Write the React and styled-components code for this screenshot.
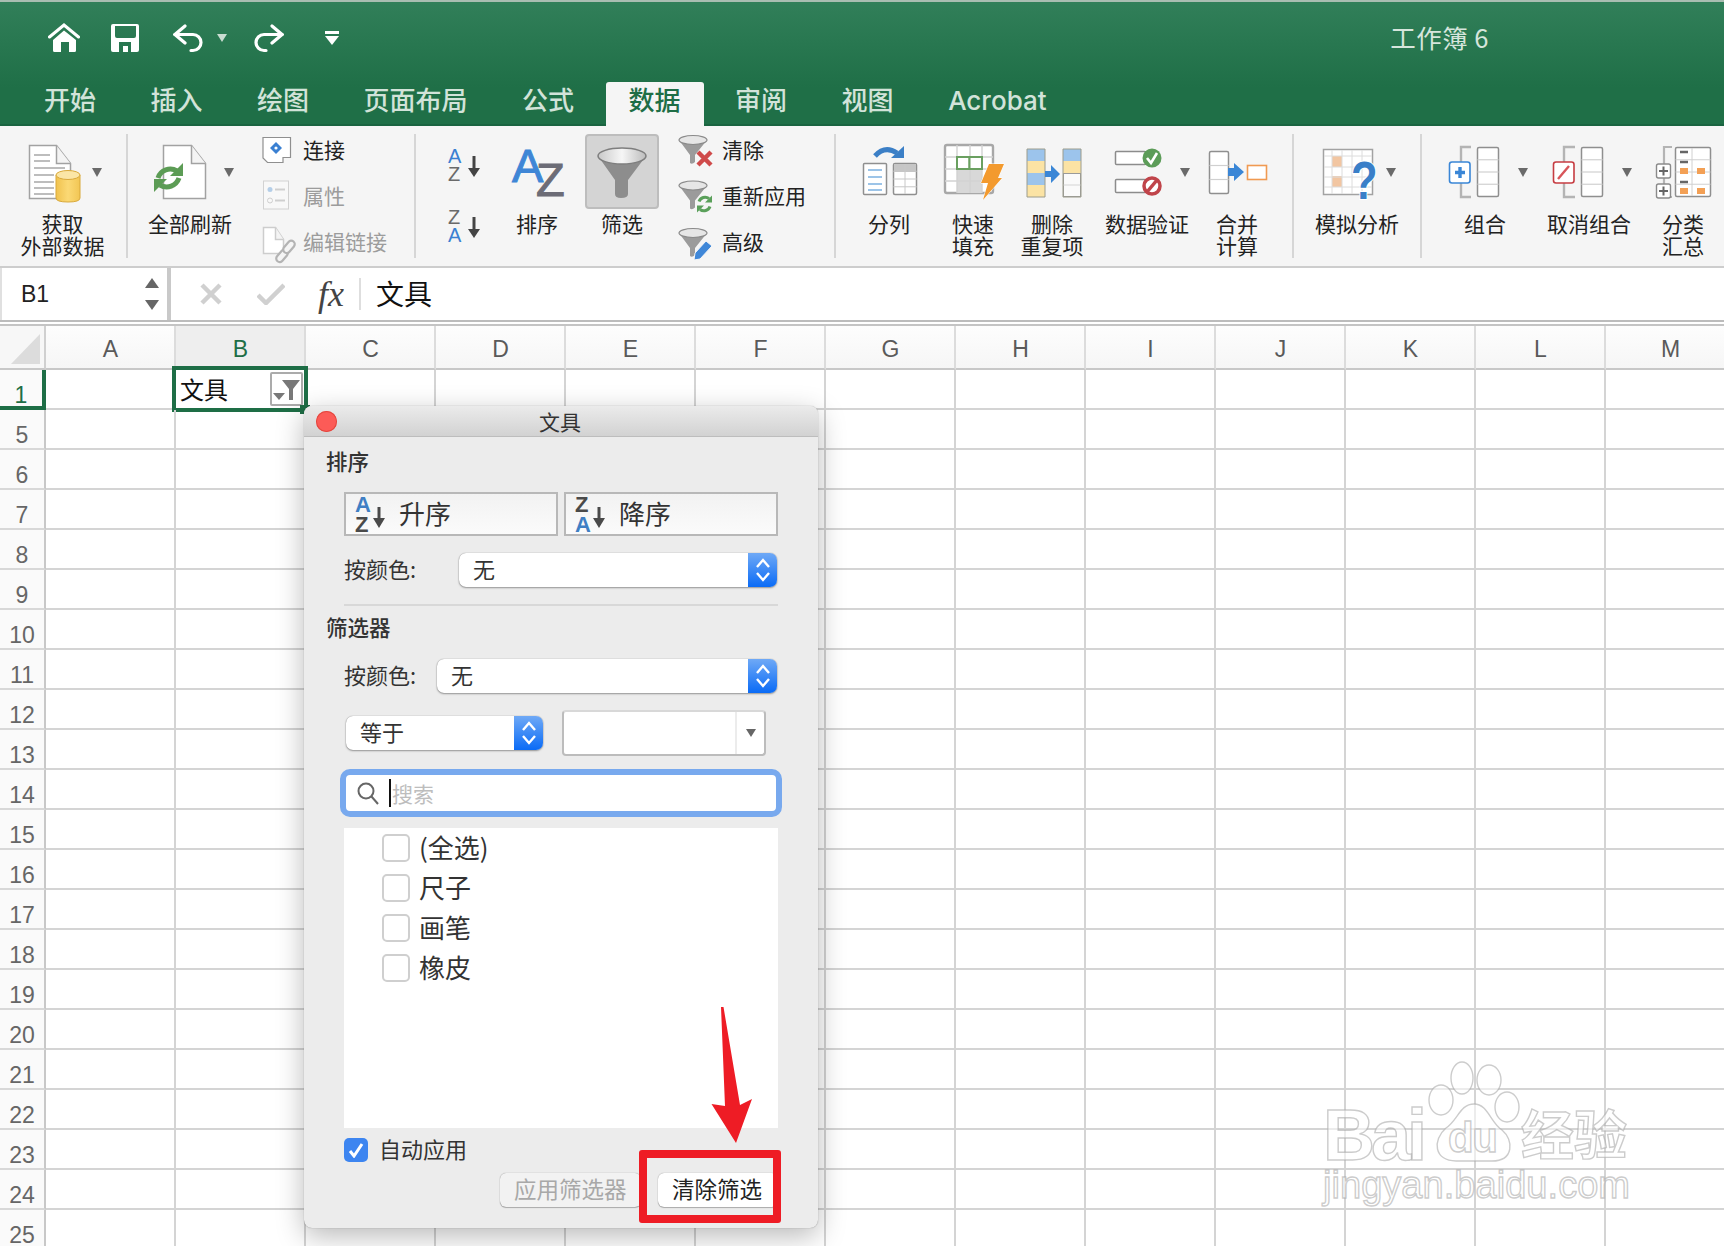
import React from "react";
import styled, { createGlobalStyle } from "styled-components";

// ============ CSS ============== //
const Global = createGlobalStyle`
  html, body { margin: 0; padding: 0; background: #fff; }
  body { font-family: "Noto Sans CJK SC", "Liberation Sans", sans-serif; }
`;

const Page = styled.div`
  position: relative;
  width: 1724px;
  height: 1246px;
  overflow: hidden;
  background: #fff;
`;

const TitleBar = styled.div`
  height: 126px;
  box-sizing: border-box;
  border-top: 2px solid #a9bdb1;
  border-bottom: 2px solid #1a6440;
  background: linear-gradient(#317f59, #1f6f47 70%);
`;
const QuickBar = styled.div`
  height: 80px;
  display: flex;
  align-items: center;
  padding: 0 235px 8px 48px;
  box-sizing: border-box;
`;
const QuickIcon = styled.svg`
  display: block;
  flex: none;
  margin-left: ${(p) => p.$ml || 0}px;
`;
const DocTitle = styled.div`
  margin: -3px 0 0 auto;
  font-size: 25.5px;
  letter-spacing: 0.5px;
  color: #d6e5dc;
`;
const Tabs = styled.div`
  display: flex;
  gap: 8.5px;
  padding-left: 21px;
  height: 42px;
`;
const Tab = styled.div`
  height: 44px;
  box-sizing: border-box;
  padding: 0 23px 6px;
  display: flex;
  align-items: center;
  font-size: 26px;
  line-height: 1;
  border-radius: 3px 3px 0 0;
  color: ${(p) => (p.$active ? "#1e6e46" : "#d2e3d9")};
  background: ${(p) => (p.$active ? "#f5f5f5" : "transparent")};
  font-weight: 500;
  font-family: "Inter", "Noto Sans CJK SC", sans-serif;
`;

const Ribbon = styled.div`
  height: 142px;
  box-sizing: border-box;
  display: flex;
  background: #f5f5f5;
  border-bottom: 2px solid #cdcdcd;
`;
const Divider = styled.div`
  flex: none;
  width: 2px;
  height: 124px;
  margin: 8px 0 0 ${(p) => p.$ml || 0}px;
  background: #d6d6d6;
`;
const Item = styled.div`
  flex: none;
  width: ${(p) => p.$w}px;
  margin-left: ${(p) => p.$ml || 0}px;
  padding-top: 8px;
  box-sizing: border-box;
`;
const IconSvg = styled.svg`
  display: block;
  overflow: visible;
`;
const Label = styled.div`
  margin: -1px -10px 0;
  font-size: 21px;
  line-height: 22px;
  color: #222;
  text-align: center;
  white-space: pre-line;
`;
const SmallCol = styled.div`
  flex: none;
  width: ${(p) => p.$w}px;
  padding-left: ${(p) => p.$pl}px;
  box-sizing: border-box;
`;
const SmallRow = styled.div`
  height: 46px;
  display: flex;
  align-items: center;
  gap: 9px;
  font-size: 21px;
  color: ${(p) => (p.$off ? "#9c9c9c" : "#222")};
`;
const RowIconWrap = styled.span`
  display: block;
  margin-top: 2px;
`;
const FilterButton = styled.div`
  position: absolute;
  left: 0;
  right: 0;
  top: 8px;
  height: 75px;
  box-sizing: border-box;
  background: #d4d4d4;
  border: 2px solid #bdbdbd;
  border-radius: 4px;
`;
const FilterItem = styled(Item)`
  position: relative;
  & > svg { position: relative; }
  & > ${Label} { position: relative; }
`;

const FormulaBar = styled.div`
  height: 52px;
  display: flex;
  align-items: center;
  background: #fff;
`;
const NameBox = styled.div`
  width: 171px;
  height: 52px;
  box-sizing: border-box;
  border-right: 4px solid #c9c9c9;
  border-left: 2px solid #e0e0e0;
  display: flex;
  align-items: center;
  justify-content: space-between;
  padding: 0 8px 0 19px;
  font-size: 23px;
  font-family: "Liberation Sans", sans-serif;
  color: #222;
`;
const FormulaTools = styled.div`
  display: flex;
  align-items: center;
  width: 190px;
  height: 32px;
  margin-right: 15px;
  border-right: 2px solid #dedede;
  padding-left: 29px;
  box-sizing: border-box;
`;
const CheckIcon = styled.svg`
  margin-left: 35px;
`;
const Fx = styled.span`
  font-family: "Liberation Serif", serif;
  font-style: italic;
  font-size: 36px;
  line-height: 32px;
  color: #444;
  margin-left: 33px;
`;
const FormulaText = styled.div`
  font-size: 28px;
  margin-top: -2px;
  color: #111;
`;
const Rule = styled.div`
  height: 2px;
  border-top: 2px solid #bcbcbc;
  border-bottom: 2px solid #c4c4c4;
`;

const Sheet = styled.div`
  display: grid;
  grid-template-columns: 46px repeat(13, 130px);
  grid-template-rows: 44px;
  grid-auto-rows: 40px;
  width: 1736px;
`;
const Corner = styled.div`
  box-sizing: border-box;
  background: #f7f7f7;
  border-right: 2px solid #d0d0d0;
  border-bottom: 2px solid #c8c8c8;
  display: flex;
  align-items: flex-end;
  padding: 0 0 4px 11px;
`;
const ColHead = styled.div`
  box-sizing: border-box;
  background: ${(p) => (p.$on ? "#eeeeee" : "linear-gradient(#fdfdfd, #f6f6f6)")};
  border-right: 2px solid #dcdcdc;
  border-bottom: 2px solid #c8c8c8;
  display: flex;
  align-items: center;
  justify-content: center;
  padding: 5px 0 0 1px;
  font-family: "Liberation Sans", sans-serif;
  font-size: 23px;
  color: ${(p) => (p.$on ? "#1e6e46" : "#5a5a5a")};
`;
const RowHead = styled.div`
  box-sizing: border-box;
  background: #fafafa;
  border-right: ${(p) => (p.$on ? "4px solid #1e6e46" : "2px solid #c8c8c8")};
  border-bottom: ${(p) => (p.$on ? "4px solid #1e6e46" : "2px solid #d8d8d8")};
  display: flex;
  justify-content: center;
  padding-top: 14px;
  font-family: "Liberation Sans", sans-serif;
  font-size: 23px;
  line-height: 22px;
  color: ${(p) => (p.$on ? "#1e6e46" : "#666")};
`;
const Cell = styled.div`
  position: relative;
  box-sizing: border-box;
  border-right: 2px solid #d4d4d4;
  border-bottom: 2px solid #d4d4d4;
`;
const ActiveCell = styled(Cell)`
  border: none;
  display: flex;
  align-items: center;
  padding: 0 0 4px 4px;
  font-size: 24px;
  color: #111;
  &::after {
    content: "";
    position: absolute;
    inset: -4px -2px -2px -4px;
    border: 4px solid #1e6e46;
  }
`;
const FilterChip = styled.div`
  position: absolute;
  right: 3px;
  top: 2px;
  width: 33px;
  height: 34px;
  box-sizing: border-box;
  border: 2px solid #ababab;
  border-radius: 2px;
  background: #fff;
`;
const Handle = styled.div`
  position: absolute;
  right: -4px;
  bottom: -4px;
  width: 10px;
  height: 9px;
  background: #1e6e46;
  z-index: 1;
`;

const Dialog = styled.div`
  position: absolute;
  left: 304px;
  top: 406px;
  width: 514px;
  height: 822px;
  box-sizing: border-box;
  background: #ececec;
  border-radius: 8px;
  box-shadow: 0 0 1px rgba(0, 0, 0, 0.45), 0 8px 28px rgba(0, 0, 0, 0.28);
  z-index: 2;
`;
const DialogTitle = styled.div`
  position: relative;
  height: 31px;
  box-sizing: border-box;
  padding-right: 2px;
  border-radius: 8px 8px 0 0;
  border-bottom: 1px solid #bdbdbd;
  background: linear-gradient(#ebebeb, #d2d2d2);
  text-align: center;
  font-size: 21px;
  line-height: 30px;
  color: #333;
`;
const CloseDot = styled.span`
  position: absolute;
  left: 12px;
  top: 5px;
  width: 21px;
  height: 21px;
  border-radius: 50%;
  background: #fc5b57;
  box-shadow: inset 0 0 0 1px #e2473f;
`;
const DialogBody = styled.div`
  padding: 0 40px;
`;
const Heading = styled.div`
  margin: ${(p) => p.$mt}px 0 0 -18px;
  height: 24px;
  line-height: 22px;
  font-size: 21.5px;
  font-weight: 500;
  color: #333;
`;
const SortRow = styled.div`
  display: flex;
  gap: 6px;
  margin-top: 18px;
`;
const SortButton = styled.div`
  width: 214px;
  height: 44px;
  box-sizing: border-box;
  border: 2px solid #b8b8b8;
  background: linear-gradient(#f2f2f2, #fbfbfb);
  display: flex;
  align-items: center;
  gap: 7px;
  padding-left: 8px;
  font-size: 26px;
  line-height: 36px;
  color: #333;
`;
const SortWord = styled.span`
  margin-top: -2px;
`;
const FieldRow = styled.div`
  display: flex;
  align-items: center;
  justify-content: space-between;
  margin-top: ${(p) => p.$mt}px;
  padding-right: 1px;
`;
const FieldLabel = styled.span`
  font-size: 22px;
  line-height: 30px;
  margin-top: -5px;
  color: #333;
`;
const Select = styled.div`
  width: ${(p) => p.$w}px;
  margin-left: ${(p) => p.$ml || 0}px;
  height: 34px;
  box-sizing: border-box;
  display: flex;
  justify-content: space-between;
  align-items: center;
  padding-left: 14px;
  background: #fff;
  border-radius: 7px;
  box-shadow: 0 0 1px rgba(0, 0, 0, 0.45), 0 1px 2px rgba(0, 0, 0, 0.35);
  overflow: hidden;
`;
const SelectText = styled.span`
  font-size: 22px;
  line-height: 30px;
  margin-top: -4px;
  color: #333;
`;
const Stepper = styled.div`
  flex: none;
  width: 29px;
  height: 34px;
  display: flex;
  align-items: center;
  justify-content: center;
  background: linear-gradient(#6fa9f6, #0a6bf6);
`;
const DialogRule = styled.div`
  height: 2px;
  margin-top: 17px;
  background: #d8d8d8;
`;
const Combo = styled.div`
  width: 204px;
  height: 46px;
  margin-right: 11px;
  box-sizing: border-box;
  display: flex;
  background: #fff;
  border: 2px solid #bcbcbc;
  border-top-color: #d8d8d8;
  border-radius: 4px;
`;
const ComboInput = styled.div`
  flex: 1;
  border-right: 2px solid #ececec;
`;
const ComboArrow = styled.div`
  flex: none;
  width: 27px;
  display: flex;
  justify-content: center;
  padding-top: 17px;
  box-sizing: border-box;
  &::after {
    content: "";
    width: 0;
    height: 0;
    border: 5px solid transparent;
    border-top: 8px solid #666;
  }
`;
const SearchRing = styled.div`
  width: 442px;
  height: 48px;
  margin: 13px 0 0 -4px;
  box-sizing: border-box;
  border: 6px solid #78a9ee;
  border-radius: 10px;
  background: #fff;
  display: flex;
  align-items: center;
  padding-left: 11px;
  font-size: 21px;
  color: #bdbdbd;
`;
const TextCaret = styled.span`
  width: 2px;
  height: 28px;
  margin: 0 1px 0 10px;
  background: #111;
`;
const List = styled.div`
  width: 434px;
  height: 300px;
  margin-top: 11px;
  box-sizing: border-box;
  background: #fff;
  padding: 6px 0 0 38px;
`;
const ListRow = styled.div`
  height: 40px;
  display: flex;
  align-items: flex-start;
  gap: 9px;
  font-size: 26px;
  line-height: 26px;
  color: #333;
`;
const Box = styled.span`
  width: 28px;
  height: 28px;
  box-sizing: border-box;
  border: 2px solid #cfcfcf;
  border-radius: 5px;
  background: #fff;
`;
const AutoRow = styled.div`
  display: flex;
  align-items: center;
  gap: 11px;
  margin-top: 10px;
  height: 24px;
  font-size: 22px;
  line-height: 22px;
  color: #333;
`;
const AutoText = styled.span`
  margin-top: -5px;
`;
const BlueBox = styled.span`
  width: 24px;
  height: 24px;
  border-radius: 5px;
  background: #3d85f0;
  display: flex;
  align-items: center;
  justify-content: center;
`;
const ButtonRow = styled.div`
  display: flex;
  justify-content: flex-end;
  gap: 17px;
  margin-top: 11px;
`;
const PushButton = styled.div`
  width: ${(p) => p.$w}px;
  height: 34px;
  box-sizing: border-box;
  padding-left: 14px;
  border-radius: 6px;
  font-size: 22.5px;
  line-height: 30px;
  white-space: nowrap;
  color: ${(p) => (p.$off ? "#a8a8a8" : "#222")};
  background: ${(p) => (p.$off ? "#f2f2f2" : "#fff")};
  box-shadow: 0 0 1px rgba(0, 0, 0, 0.45), 0 1px 1px rgba(0, 0, 0, 0.25);
`;

const RedBox = styled.div`
  position: absolute;
  left: 639px;
  top: 1150px;
  width: 142px;
  height: 73px;
  box-sizing: border-box;
  border: 8px solid #ee1c25;
  border-radius: 3px;
  z-index: 3;
`;
const Overlay = styled.svg`
  position: absolute;
  left: 0;
  top: 0;
  z-index: 3;
  pointer-events: none;
`;

// ============ Drawing helpers ============== //
const latin = "Liberation Sans, sans-serif";
const cjk = "Noto Sans CJK SC, sans-serif";

const Icon = ({ left, w, children }) => (
  <IconSvg width={w} height={79} viewBox={`${left} 134 ${w} 79`}>
    {children}
  </IconSvg>
);
const RowIcon = ({ left, top, children }) => (
  <RowIconWrap>
    <IconSvg width={34} height={34} viewBox={`${left} ${top} 34 34`}>
      {children}
    </IconSvg>
  </RowIconWrap>
);
const Caret = ({ x, y = 172 }) => (
  <polygon points={`${x - 5},${y - 4} ${x + 5},${y - 4} ${x},${y + 5}`} fill="#6a6a6a" />
);
const Doc = ({ x, y, w, h, fold = 14, stroke = "#a2a2a2" }) => (
  <g fill="none" stroke={stroke} strokeWidth="1.5">
    <path d={`M${x} ${y}H${x + w - fold}L${x + w} ${y + fold + 4}V${y + h}H${x}Z`} fill="#fff" />
    <path d={`M${x + w - fold} ${y}V${y + fold + 4}H${x + w}`} fill="#f4f4f4" />
  </g>
);
const Funnel = ({ x, y }) => (
  <g transform={`translate(${x} ${y})`}>
    <path d="M0 5L11 20V28Q13 30 16 27V20L28 5Z" fill="#9b9b9b" />
    <ellipse cx="14" cy="5" rx="14" ry="4.5" fill="#e6e6e6" stroke="#8a8a8a" strokeWidth="1.2" />
  </g>
);
const Column = ({ x, y, w, h, rows = 4 }) => (
  <g>
    <rect x={x} y={y} width={w} height={h} rx="1.5" fill="#fff" stroke="#8f8f8f" strokeWidth="1.5" />
    {Array.from({ length: rows - 1 }, (_, i) => (
      <line key={i} x1={x} x2={x + w} y1={y + ((i + 1) * h) / rows} y2={y + ((i + 1) * h) / rows} stroke="#d0d0d0" strokeWidth="1.2" />
    ))}
  </g>
);
const SmallSort = ({ top, bottom, y }) => (
  <g fontFamily={latin} fontSize="20">
    <text x="448" y={y + 15} fill={top === "A" ? "#3a80d2" : "#6a6a6a"}>{top}</text>
    <text x="448" y={y + 33} fill={bottom === "A" ? "#3a80d2" : "#6a6a6a"}>{bottom}</text>
    <path d={`M474 ${y + 8}V${y + 24}`} stroke="#444" strokeWidth="3" />
    <polygon points={`${468},${y + 20} ${480},${y + 20} ${474},${y + 29}`} fill="#444" />
  </g>
);
const SortGlyph = ({ top, bottom }) => (
  <IconSvg width="38" height="40" viewBox="0 0 38 40">
    <g fontFamily={latin} fontSize="22" fontWeight="700">
      <text x="1" y="18" fill={top === "A" ? "#3f7fc4" : "#4a4a4a"}>{top}</text>
      <text x="1" y="38" fill={bottom === "A" ? "#3f7fc4" : "#4a4a4a"}>{bottom}</text>
    </g>
    <path d="M25 13V28" stroke="#4a4a4a" strokeWidth="3" />
    <polygon points="19,24 31,24 25,34" fill="#4a4a4a" />
  </IconSvg>
);
const Chevrons = () => (
  <svg width="16" height="26" viewBox="0 0 16 26" fill="none" stroke="#fff" strokeWidth="2.4">
    <path d="M2 10L8 3L14 10" />
    <path d="M2 16L8 23L14 16" />
  </svg>
);

const rows = [1, ...Array.from({ length: 21 }, (_, i) => i + 5)];
const cols = "ABCDEFGHIJKLM".split("");
const tabs = ["开始", "插入", "绘图", "页面布局", "公式", "数据", "审阅", "视图", "Acrobat"];
const values = ["(全选)", "尺子", "画笔", "橡皮"];

// ============ Function ============== //
const App = () => {
  return (
    <Page>
      <Global />
      <TitleBar>
        <QuickBar>
          <QuickIcon width="32" height="30" viewBox="0 0 32 30" fill="#fff">
            <path d="M1.5 14L16 2L30.5 14" fill="none" stroke="#fff" strokeWidth="3" strokeLinecap="round" />
            <path fillRule="evenodd" d="M5 17L16 7.5L28 17V27.5Q28 29 26.5 29H21V19H13V29H6.5Q5 29 5 27.5Z" />
          </QuickIcon>
          <QuickIcon $ml={31} width="28" height="28" viewBox="0 0 28 28" fill="#fff">
            <path fillRule="evenodd" d="M2 0H26Q28 0 28 2V26Q28 28 26 28H2Q0 28 0 26V2Q0 0 2 0ZM4 2V12Q4 14 6 14H23Q25 14 25 12V2ZM8 18V28H20V18Z" />
            <rect x="12" y="22" width="5" height="6" />
          </QuickIcon>
          <QuickIcon $ml={34} width="30" height="29" viewBox="0 0 30 29" fill="none" stroke="#fff" strokeWidth="3.2" strokeLinecap="round">
            <path d="M12 2L2 10.5L12 19" />
            <path d="M2 10.5H20A8 8 0 0 1 20 26.5H18" />
          </QuickIcon>
          <QuickIcon $ml={14} width="10" height="8" viewBox="0 0 10 8" fill="#c9ddd1">
            <polygon points="0,0 10,0 5,8" />
          </QuickIcon>
          <QuickIcon $ml={27} width="30" height="29" viewBox="0 0 30 29" fill="none" stroke="#fff" strokeWidth="3.2" strokeLinecap="round">
            <path d="M18 2L28 10.5L18 19" />
            <path d="M28 10.5H10A8 8 0 0 0 10 26.5H12" />
          </QuickIcon>
          <QuickIcon $ml={41} width="14" height="14" viewBox="0 0 14 14" fill="#fff">
            <rect x="0" y="0" width="14" height="3" />
            <polygon points="0,5 14,5 7,14" />
          </QuickIcon>
          <DocTitle>工作簿 6</DocTitle>
        </QuickBar>
        <Tabs>
          {tabs.map((t) => (
            <Tab key={t} $active={t === "数据"}>{t}</Tab>
          ))}
        </Tabs>
      </TitleBar>

      <Ribbon>
        <Item $w={125}>
          <Icon left={0} w={125}>
            <defs>
              <linearGradient id="barrel" x1="0" x2="1">
                <stop offset="0" stopColor="#f0c24e" />
                <stop offset="0.5" stopColor="#fbd975" />
                <stop offset="1" stopColor="#f2c654" />
              </linearGradient>
            </defs>
            <Doc x={29.5} y={145.5} w={41} h={53} />
            <path d="M34 155H50M34 161H50M34 168H65M34 175H54M34 182H54M34 188H54M34 194H54" stroke="#bdbdbd" strokeWidth="2" />
            <path d="M56 175V198Q56 202 68 202Q80 202 80 198V175Z" fill="url(#barrel)" stroke="#d9a93a" />
            <ellipse cx="68" cy="175" rx="12" ry="4.5" fill="#fbe6a6" stroke="#d9a93a" />
            <Caret x={97} />
          </Icon>
          <Label>{"获取\n外部数据"}</Label>
        </Item>
        <Divider $ml={1} />
        <Item $w={124}>
          <Icon left={128} w={124}>
            <Doc x={163.5} y={145.5} w={42} h={53} />
            <path d="M158 178A13 13 0 0 1 177 171" fill="none" stroke="#5c9c55" strokeWidth="5" />
            <polygon points="183,163 183,176 170,176" fill="#5c9c55" />
            <path d="M179 178A13 13 0 0 1 160 185" fill="none" stroke="#5c9c55" strokeWidth="5" />
            <polygon points="154,192 154,179 167,179" fill="#5c9c55" />
            <Caret x={229} />
          </Icon>
          <Label>全部刷新</Label>
        </Item>
        <SmallCol $w={162} $pl={8}>
          <SmallRow>
            <RowIcon left={260} top={133}>
              <path d="M263 137.5H290.5V157.5H283V162.5H267.5L263 158Z" fill="#fff" stroke="#8f8f8f" strokeWidth="1.2" />
              <polygon points="276,142 282,148 276,154 270,148" fill="#3a80d2" />
              <circle cx="276" cy="148" r="1.6" fill="#fff" />
            </RowIcon>
            连接
          </SmallRow>
          <SmallRow $off>
            <RowIcon left={260} top={179.5}>
              <rect x="263.5" y="181.5" width="25" height="28" fill="#f8f8f8" stroke="#d2d2d2" />
              <circle cx="270" cy="190" r="2.5" fill="#b4cee8" />
              <circle cx="270" cy="201" r="2.5" fill="none" stroke="#cfcfcf" />
              <path d="M275 190H285M275 201H285" stroke="#cfcfcf" strokeWidth="2" />
            </RowIcon>
            属性
          </SmallRow>
          <SmallRow $off>
            <RowIcon left={260} top={225}>
              <Doc x={263.5} y={227.5} w={20} h={26} fold={8} stroke="#cdcdcd" />
              <g fill="#f5f5f5" stroke="#b4b4b4" strokeWidth="2.2">
                <rect x="-6.5" y="0" width="14" height="7" rx="3.5" transform="translate(279 254) rotate(-50)" />
                <rect x="-6.5" y="0" width="14" height="7" rx="3.5" transform="translate(286 245) rotate(-50)" />
              </g>
            </RowIcon>
            编辑链接
          </SmallRow>
        </SmallCol>
        <Divider />
        <Item $w={84}>
          <Icon left={416} w={84}>
            <SmallSort top="A" bottom="Z" y={148} />
            <SmallSort top="Z" bottom="A" y={209} />
          </Icon>
        </Item>
        <Item $w={74}>
          <Icon left={500} w={74}>
            <text x="512" y="182" fontFamily={latin} fontSize="47" fill="#3f86d6" stroke="#3f86d6">A</text>
            <text x="536" y="196" fontFamily={latin} fontSize="47" fill="#6c6c76" stroke="#6c6c76">Z</text>
          </Icon>
          <Label>排序</Label>
        </Item>
        <FilterItem $w={74} $ml={11}>
          <FilterButton />
          <Icon left={585} w={74}>
            <defs>
              <linearGradient id="funnelTop" x1="0" x2="1">
                <stop offset="0" stopColor="#c9c9c9" />
                <stop offset="0.5" stopColor="#f6f6f6" />
                <stop offset="1" stopColor="#bcbcbc" />
              </linearGradient>
            </defs>
            <path d="M598 156L615 180V194Q615 198 621 198Q628 198 628 194V180L646 156Z" fill="#8d8d8d" />
            <ellipse cx="622" cy="156" rx="24" ry="8" fill="url(#funnelTop)" stroke="#7e7e7e" strokeWidth="1.5" />
          </Icon>
          <Label>筛选</Label>
        </FilterItem>
        <SmallCol $w={175} $pl={20}>
          <SmallRow>
            <RowIcon left={679} top={133}>
              <Funnel x={679} y={135} />
              <path d="M698 152L711 165M711 152L698 165" stroke="#cf4a4a" strokeWidth="4.4" />
            </RowIcon>
            清除
          </SmallRow>
          <SmallRow>
            <RowIcon left={679} top={179.5}>
              <Funnel x={679} y={181} />
              <path d="M699 202A6.5 6.5 0 0 1 709 199" fill="none" stroke="#5aa05a" strokeWidth="3" />
              <polygon points="712,196 712,203 705,203" fill="#5aa05a" />
              <path d="M710 207A6.5 6.5 0 0 1 700 210" fill="none" stroke="#5aa05a" strokeWidth="3" />
              <polygon points="697,213 697,206 704,206" fill="#5aa05a" />
            </RowIcon>
            重新应用
          </SmallRow>
          <SmallRow>
            <RowIcon left={679} top={225}>
              <Funnel x={679} y={228} />
              <path d="M706 241L712 246L700 259L694 260L695 253Z" fill="#3f87d8" stroke="#f5f5f5" />
            </RowIcon>
            高级
          </SmallRow>
        </SmallCol>
        <Divider />
        <Item $w={106}>
          <Icon left={836} w={106}>
            <path d="M875 156Q885 145 897 153" fill="none" stroke="#3b7fc6" strokeWidth="5" />
            <polygon points="904,146 904,158 891,158" fill="#3b7fc6" />
            <rect x="863.5" y="163.5" width="23" height="31" rx="1" fill="#fff" stroke="#8f8f8f" strokeWidth="1.5" />
            <path d="M868 170H882M868 177H882M868 184H882M868 190H882" stroke="#9cc4e8" strokeWidth="2.2" />
            <Column x={893.5} y={163.5} w={23} h={31} rows={4} />
            <rect x="894" y="164" width="22" height="8" fill="#c6c6c6" />
            <line x1="905" x2="905" y1="164" y2="194" stroke="#c8c8c8" />
          </Icon>
          <Label>分列</Label>
        </Item>
        <Item $w={62}>
          <Icon left={942} w={62}>
            <rect x="945" y="145" width="48" height="48" rx="2" fill="#fff" stroke="#a8a8a8" strokeWidth="2.4" />
            <rect x="957" y="169" width="25" height="24" fill="#d8d8d8" />
            <path d="M957 145V193M970 145V193M982 145V193M945 157H993M945 169H993M945 181H993" stroke="#d2d2d2" strokeWidth="1.4" />
            <rect x="957" y="157" width="12.5" height="12" fill="#fff" stroke="#6aa060" strokeWidth="2" />
            <rect x="969.5" y="157" width="12.5" height="12" fill="#fff" stroke="#6aa060" strokeWidth="2" />
            <polygon points="989,164 1004,164 998,178 1002,178 983,200 988,183 981,183" fill="#f39a2e" stroke="#fff" strokeWidth="1" paintOrder="stroke" />
          </Icon>
          <Label>{"快速\n填充"}</Label>
        </Item>
        <Item $w={96}>
          <Icon left={1004} w={96}>
            <rect x="1027" y="149" width="18" height="12" fill="#9cc4ec" />
            <rect x="1027" y="161" width="18" height="12" fill="#fbe3a4" />
            <rect x="1027" y="173" width="18" height="12" fill="#9cc4ec" />
            <rect x="1027" y="185" width="18" height="12" fill="#fbe3a4" />
            <rect x="1063" y="149" width="18" height="12" fill="#9cc4ec" />
            <rect x="1063" y="161" width="18" height="12" fill="#fbe3a4" />
            <rect x="1063.5" y="173.5" width="17" height="23" fill="#fafafa" stroke="#9a9a9a" />
            <line x1="1063" x2="1081" y1="185" y2="185" stroke="#d4d4d4" />
            <path d="M1027 149H1045V197H1027ZM1063 149H1081V197H1063Z" fill="none" stroke="#9c9c8c" />
            <path d="M1045 171H1051V165L1060 174L1051 183V177H1045Z" fill="#3a86d6" />
          </Icon>
          <Label>{"删除\n重复项"}</Label>
        </Item>
        <Item $w={94}>
          <Icon left={1100} w={94}>
            <rect x="1115.5" y="151.5" width="30" height="13" rx="1" fill="#fff" stroke="#8c8c8c" strokeWidth="1.5" />
            <circle cx="1152" cy="158" r="9.5" fill="#5c9c58" />
            <path d="M1147 158L1151 163L1157 153" fill="none" stroke="#fff" strokeWidth="2.6" />
            <rect x="1115.5" y="179.5" width="30" height="13" rx="1" fill="#fff" stroke="#8c8c8c" strokeWidth="1.5" />
            <circle cx="1152" cy="186" r="8" fill="#fff" stroke="#c0444a" strokeWidth="3.5" />
            <path d="M1147 192L1157 180" stroke="#c0444a" strokeWidth="3.5" />
            <Caret x={1185} />
          </Icon>
          <Label>数据验证</Label>
        </Item>
        <Item $w={86}>
          <Icon left={1194} w={86}>
            <Column x={1209.5} y={151.5} w={19} h={42} rows={3} />
            <path d="M1228 168H1234V163L1244 172L1234 181V176H1228Z" fill="#3a86d6" />
            <rect x="1247.5" y="165.5" width="19" height="14" fill="#fff" stroke="#f09a52" strokeWidth="1.6" />
          </Icon>
          <Label>{"合并\n计算"}</Label>
        </Item>
        <Divider $ml={12} />
        <Item $w={126}>
          <Icon left={1294} w={126}>
            <rect x="1323.5" y="149.5" width="49" height="45" fill="#fff" stroke="#a2a2a2" strokeWidth="1.5" />
            <rect x="1332" y="156" width="10" height="11" fill="#f2c6a2" />
            <rect x="1332" y="176" width="10" height="11" fill="#f2c6a2" />
            <path d="M1332 150V194M1342 150V194M1352 150V194M1362 150V194M1324 156H1372M1324 167H1372M1324 177H1372M1324 187H1372" stroke="#dcdcdc" />
            <text transform="translate(1351 199) scale(0.82 1)" fontFamily={latin} fontWeight="700" fontSize="53" fill="#3a7fc8" stroke="#fff" strokeWidth="2" paintOrder="stroke">?</text>
            <Caret x={1391} />
          </Icon>
          <Label>模拟分析</Label>
        </Item>
        <Divider />
        <Item $w={126}>
          <Icon left={1422} w={126}>
            <path d="M1471 147H1461V197H1471" fill="none" stroke="#b4b4b4" strokeWidth="2.4" />
            <rect x="1449.5" y="162" width="20.5" height="21" rx="2.5" fill="#fff" stroke="#3a86d6" strokeWidth="1.6" />
            <path d="M1455 172.5H1465M1460 167V178" stroke="#3a86d6" strokeWidth="3.4" />
            <Column x={1477.5} y={147.5} w={21} h={49} />
            <Caret x={1523} />
          </Icon>
          <Label>组合</Label>
        </Item>
        <Item $w={82}>
          <Icon left={1548} w={82}>
            <path d="M1575 147H1564V197H1575" fill="none" stroke="#b4b4b4" strokeWidth="2.4" />
            <rect x="1553.5" y="162" width="20.5" height="21" rx="2.5" fill="#fff" stroke="#c63c42" strokeWidth="1.6" />
            <path d="M1558 179L1569 166" stroke="#d8555a" strokeWidth="2.4" />
            <Column x={1581.5} y={147.5} w={21} h={49} />
            <Caret x={1627} />
          </Icon>
          <Label>取消组合</Label>
        </Item>
        <Item $w={106}>
          <Icon left={1630} w={106}>
            <path d="M1672 147H1664V197H1672" fill="none" stroke="#b4b4b4" strokeWidth="2.2" />
            <rect x="1656.5" y="164" width="14" height="14" rx="2" fill="#fff" stroke="#8a8a8a" strokeWidth="1.4" />
            <path d="M1659 171H1668M1663.5 166.5V175.5" stroke="#666" strokeWidth="2" />
            <rect x="1656.5" y="184" width="14" height="14" rx="2" fill="#fff" stroke="#8a8a8a" strokeWidth="1.4" />
            <path d="M1659 191H1668M1663.5 186.5V195.5" stroke="#666" strokeWidth="2" />
            <Column x={1675.5} y={147.5} w={35} h={49} />
            <line x1="1692" x2="1692" y1="148" y2="196" stroke="#d0d0d0" />
            <path d="M1680 152H1688M1680 162H1688M1680 182H1688" stroke="#666" strokeWidth="2.4" />
            <rect x="1680" y="168" width="8" height="6" fill="#f3a055" />
            <rect x="1697" y="168" width="8" height="6" fill="#f3a055" />
            <rect x="1680" y="188" width="8" height="6" fill="#f3a055" />
            <rect x="1697" y="188" width="8" height="6" fill="#f3a055" />
          </Icon>
          <Label>{"分类\n汇总"}</Label>
        </Item>
      </Ribbon>

      <FormulaBar>
        <NameBox>
          B1
          <svg width="14" height="32" viewBox="0 0 14 32" fill="#666">
            <polygon points="7,0 14,10 0,10" />
            <polygon points="7,32 14,22 0,22" />
          </svg>
        </NameBox>
        <FormulaTools>
          <svg width="22" height="22" viewBox="0 0 22 22" stroke="#d0d0d0" strokeWidth="4.5" fill="none">
            <path d="M2 2L20 20M20 2L2 20" />
          </svg>
          <CheckIcon width="28" height="22" viewBox="0 0 28 22" stroke="#d0d0d0" strokeWidth="4.5" fill="none">
            <path d="M1 12L9 20L27 2" />
          </CheckIcon>
          <Fx>fx</Fx>
        </FormulaTools>
        <FormulaText>文具</FormulaText>
      </FormulaBar>
      <Rule />

      <Sheet>
        <Corner>
          <svg width="29" height="30" viewBox="0 0 29 30">
            <polygon points="29,0 29,30 0,30" fill="#dcdcdc" />
          </svg>
        </Corner>
        {cols.map((c) => (
          <ColHead key={c} $on={c === "B"}>{c}</ColHead>
        ))}
        {rows.map((r) => (
          <React.Fragment key={r}>
            <RowHead $on={r === 1}>{r}</RowHead>
            {cols.map((c) =>
              r === 1 && c === "B" ? (
                <ActiveCell key={c}>
                  文具
                  <FilterChip>
                    <svg width="29" height="30" viewBox="0 0 29 30">
                      <polygon points="10,6 28,6 21,15 21,26 17,26 17,15" fill="#787878" />
                      <polygon points="1,19 13,19 7,26" fill="#787878" />
                    </svg>
                  </FilterChip>
                  <Handle />
                </ActiveCell>
              ) : (
                <Cell key={c} />
              )
            )}
          </React.Fragment>
        ))}
      </Sheet>

      <Dialog>
        <DialogTitle>
          <CloseDot />
          文具
        </DialogTitle>
        <DialogBody>
          <Heading $mt={13}>排序</Heading>
          <SortRow>
            <SortButton>
              <SortGlyph top="A" bottom="Z" />
              <SortWord>升序</SortWord>
            </SortButton>
            <SortButton>
              <SortGlyph top="Z" bottom="A" />
              <SortWord>降序</SortWord>
            </SortButton>
          </SortRow>
          <FieldRow $mt={17}>
            <FieldLabel>按颜色:</FieldLabel>
            <Select $w={318}>
              <SelectText>无</SelectText>
              <Stepper><Chevrons /></Stepper>
            </Select>
          </FieldRow>
          <DialogRule />
          <Heading $mt={10}>筛选器</Heading>
          <FieldRow $mt={19}>
            <FieldLabel>按颜色:</FieldLabel>
            <Select $w={340}>
              <SelectText>无</SelectText>
              <Stepper><Chevrons /></Stepper>
            </Select>
          </FieldRow>
          <FieldRow $mt={17}>
            <Select $w={197} $ml={2}>
              <SelectText>等于</SelectText>
              <Stepper><Chevrons /></Stepper>
            </Select>
            <Combo>
              <ComboInput />
              <ComboArrow />
            </Combo>
          </FieldRow>
          <SearchRing>
            <svg width="22" height="24" viewBox="0 0 22 24" fill="none" stroke="#666" strokeWidth="2">
              <circle cx="9" cy="10" r="7.5" />
              <path d="M14.5 15.5L21 23" />
            </svg>
            <TextCaret />
            搜索
          </SearchRing>
          <List>
            {values.map((v) => (
              <ListRow key={v}>
                <Box />
                {v}
              </ListRow>
            ))}
          </List>
          <AutoRow>
            <BlueBox>
              <svg width="16" height="16" viewBox="0 0 16 16" fill="none" stroke="#fff" strokeWidth="3">
                <path d="M2 9L6 14L14 2" />
              </svg>
            </BlueBox>
            <AutoText>自动应用</AutoText>
          </AutoRow>
          <ButtonRow>
            <PushButton $off $w={141}>应用筛选器</PushButton>
            <PushButton $w={120}>清除筛选</PushButton>
          </ButtonRow>
        </DialogBody>
      </Dialog>

      <RedBox />
      <Overlay width="1724" height="1246" viewBox="0 0 1724 1246">
        <polygon points="721,1007 723.5,1007 740,1105 752,1099 736,1143 711.5,1104 725,1106" fill="#ee1c25" />
        <g fill="rgba(255,255,255,0.55)" stroke="rgba(170,170,170,0.6)" strokeWidth="1.4">
          <ellipse cx="1462" cy="1078" rx="11" ry="16" />
          <ellipse cx="1489" cy="1080" rx="12" ry="15" />
          <ellipse cx="1441" cy="1100" rx="12" ry="15" />
          <ellipse cx="1507" cy="1107" rx="12" ry="15" />
          <path d="M1474 1104C1488 1104 1490 1122 1502 1130C1514 1140 1514 1161 1492 1161H1456C1434 1161 1432 1140 1446 1128C1458 1120 1460 1104 1474 1104Z" />
          <text x="1323" y="1160" fontFamily={latin} fontWeight="700" fontSize="72" textLength="104">Bai</text>
          <text x="1448" y="1152" fontFamily={latin} fontWeight="700" fontSize="42" textLength="50">du</text>
          <text x="1521" y="1155" fontFamily={cjk} fontWeight="700" fontSize="53">经验</text>
          <text x="1323" y="1198" fontFamily={latin} fontSize="38" textLength="307">jingyan.baidu.com</text>
        </g>
      </Overlay>
    </Page>
  );
};

export default App;
